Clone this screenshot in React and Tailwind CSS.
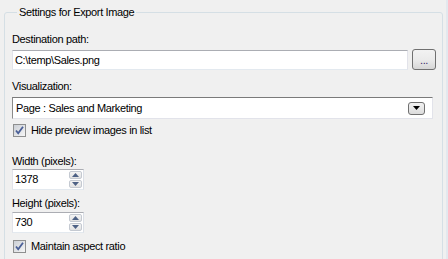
import React from 'react';

const FONT = "font-['Liberation_Sans',Arial,sans-serif]";

const CheckBox = ({ label, className = '' }) => (
    <label className={`flex items-center gap-[5px] ${className}`}>
        <span className="w-[13px] h-[13px] border border-[#8e8f8f] bg-gradient-to-br from-[#cbcfd5] to-[#f6f6f6] flex items-center justify-center">
            <svg width="11" height="11" viewBox="0 0 11 11">
                <path d="M2 5.5 L4.2 8.3 L9 1.8" fill="none" stroke="#4a5f97" strokeWidth="1.8" />
            </svg>
        </span>
        <span className="leading-[13px]">{label}</span>
    </label>
);

const Spinner = ({ value }) => (
    <div className="w-[72px] h-[21px] flex bg-white border border-[#abadb3] border-b-[#e3e9ef] border-r-[#dbdfe6] border-l-[#e2e3ea]">
        <span className="flex-1 pl-[2px] leading-[19px]">{value}</span>
        <div className="w-[15px] flex flex-col gap-[1px] p-[1px]">
            <div className="flex-1 border border-[#c4c9d1] rounded-[2px] bg-gradient-to-b from-[#f4f4f4] to-[#e2e2e2] flex items-center justify-center">
                <svg width="7" height="4" viewBox="0 0 7 4"><path d="M0 4 L3.5 0 L7 4 Z" fill="#4d6185" /></svg>
            </div>
            <div className="flex-1 border border-[#c4c9d1] rounded-[2px] bg-gradient-to-b from-[#f4f4f4] to-[#e2e2e2] flex items-center justify-center">
                <svg width="7" height="4" viewBox="0 0 7 4"><path d="M0 0 L7 0 L3.5 4 Z" fill="#4d6185" /></svg>
            </div>
        </div>
    </div>
);

export default function App() {
    return (
        <div className={`w-[448px] h-[259px] bg-[#f0f0f0] overflow-hidden flex text-[11px] tracking-[-0.35px] text-black ${FONT}`}>
            <fieldset className="ml-[4px] mt-[6px] w-[439px] h-[300px] shrink-0 border border-[#d5dfe5] rounded-[3px] pl-[7px] pr-[5px]">
                <legend className="ml-[5px] px-[2px] leading-[13px]">Settings for Export Image</legend>

                {/* Destination */}
                <div className="mt-[14px] leading-[13px]">Destination path:</div>
                <div className="mt-[3px] flex items-center gap-[4px]">
                    <div className="w-[396px] h-[20px] bg-white border border-[#abadb3] border-b-[#e3e9ef] border-x-[#e2e3ea] pl-[2px] leading-[18px]">
                        C:\temp\Sales.png
                    </div>
                    <button className="w-[24px] h-[21px] rounded-[3px] border border-[#707070] bg-gradient-to-b from-[#f2f2f2] via-[#ebebeb] to-[#d6d6d6] leading-[10px] text-[#3a2a6a]">
                        ...
                    </button>
                </div>

                {/* Visualization */}
                <div className="mt-[10px] leading-[13px]">Visualization:</div>
                <div className="mt-[4px] w-[421px] h-[22px] bg-white border border-[#e2e3ea] border-t-[#7a7a7a] border-l-[#8a8a8a] flex items-center pl-[3px] pr-[7px]">
                    <span className="flex-1">Page : Sales and Marketing</span>
                    <span className="w-[17px] h-[13px] rounded-[3px] border border-[#707070] bg-gradient-to-b from-[#f2f2f2] to-[#dcdcdc] flex items-center justify-center">
                        <svg width="7" height="4" viewBox="0 0 7 4"><path d="M0 0 L7 0 L3.5 4 Z" fill="#000" /></svg>
                    </span>
                </div>
                <CheckBox label="Hide preview images in list" className="mt-[5px] ml-[1px]" />

                {/* Size */}
                <div className="mt-[18px] leading-[13px]">Width (pixels):</div>
                <div className="mt-[1px]"><Spinner value="1378" /></div>
                <div className="mt-[7px] leading-[13px]">Height (pixels):</div>
                <div className="mt-[2px]"><Spinner value="730" /></div>
                <CheckBox label="Maintain aspect ratio" className="mt-[7px] ml-[1px]" />
            </fieldset>
            <div className="ml-auto w-[2px] bg-[#e3e8ee]" />
        </div>
    );
}
